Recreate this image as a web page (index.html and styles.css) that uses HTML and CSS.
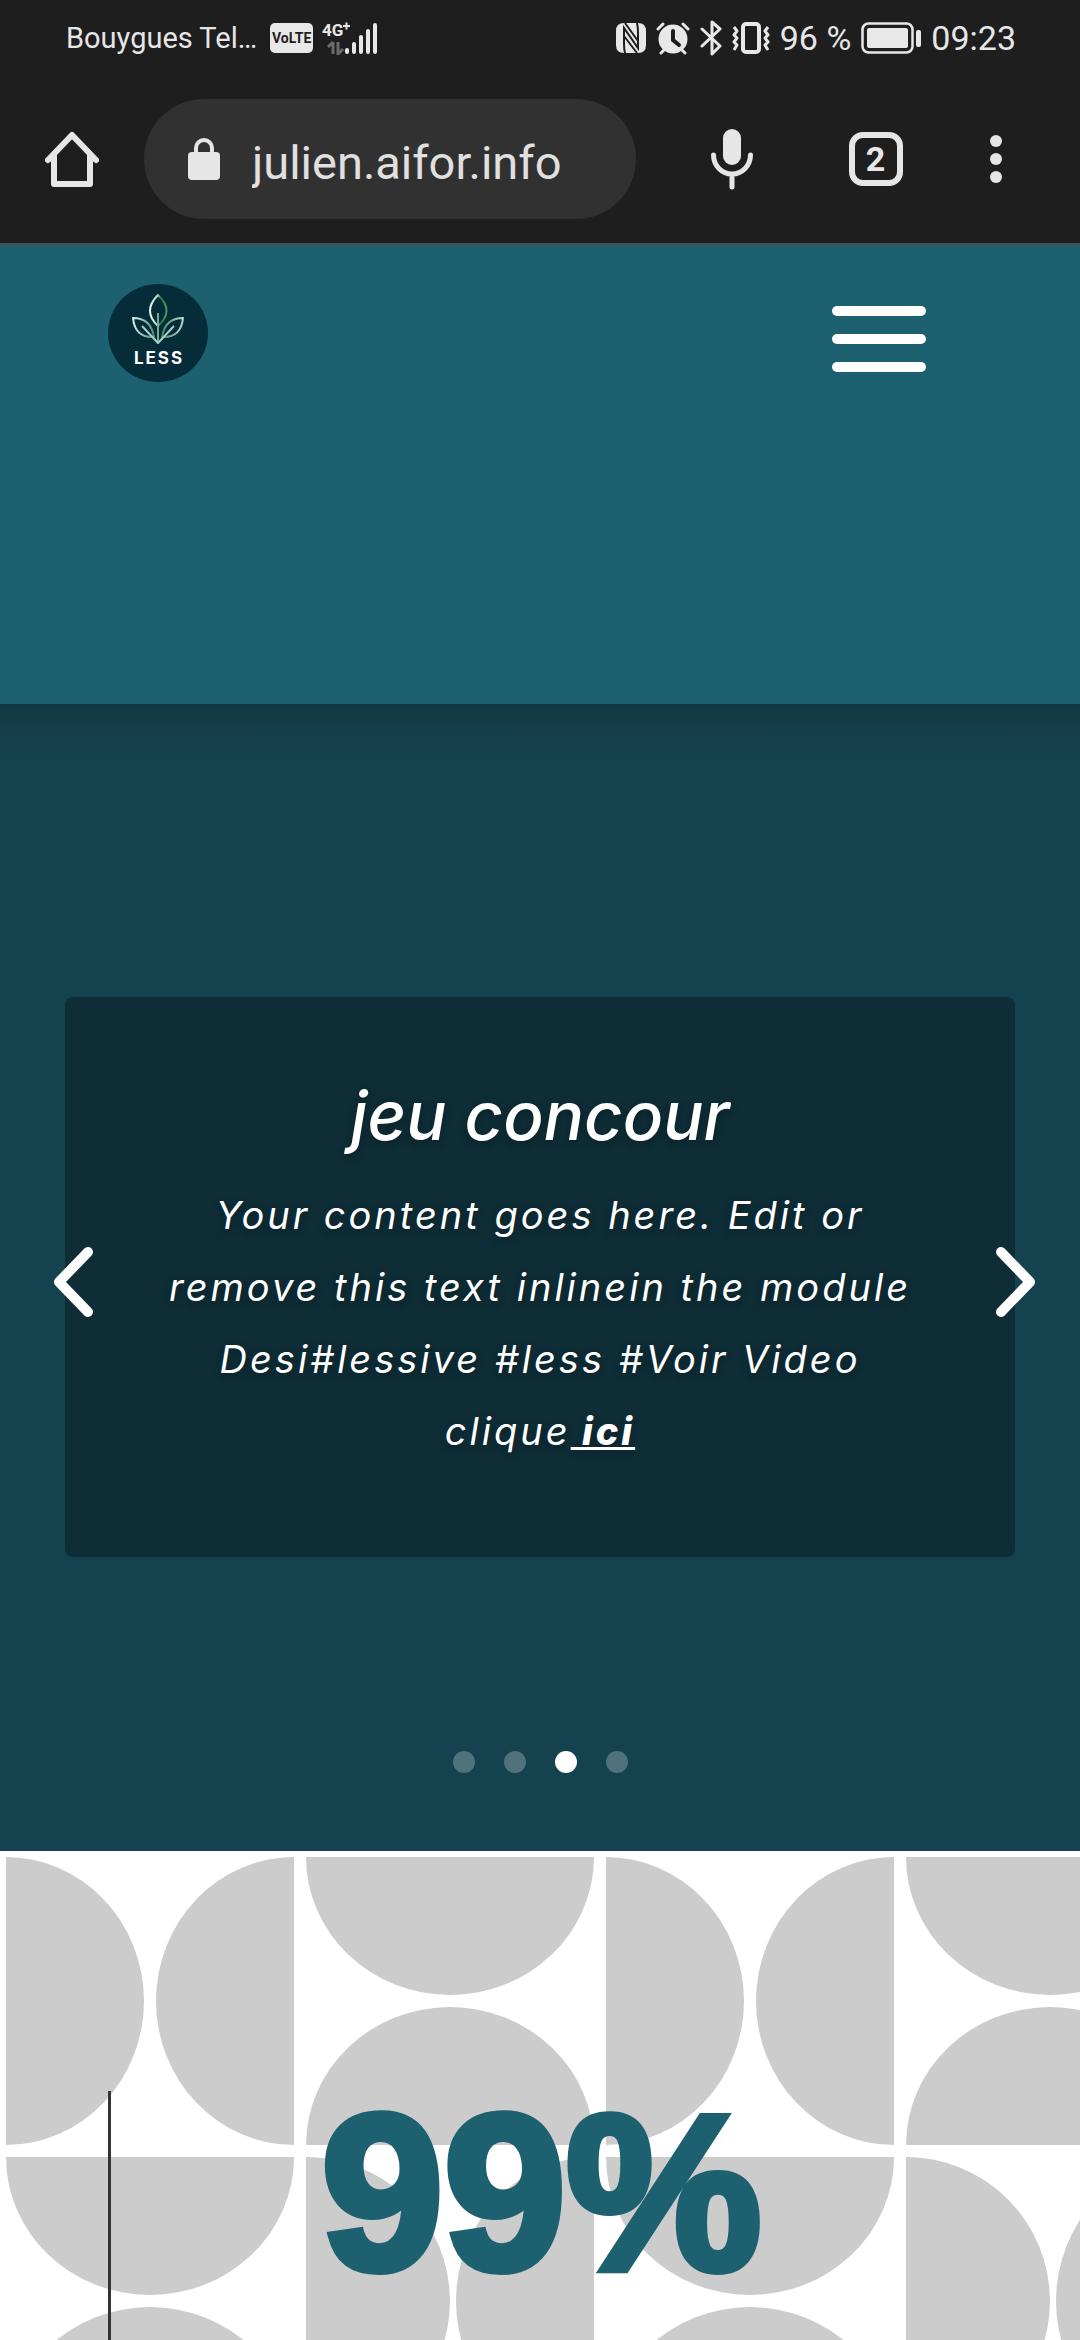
FILE: index.html
```html
<!DOCTYPE html>
<html lang="fr">
<head>
<meta charset="utf-8">
<meta name="viewport" content="width=device-width, initial-scale=1">
<title>Less</title>
<link rel="stylesheet" href="styles.css">
</head>
<body>
<div class="browser">
  <div class="status">
    <span class="carrier">Bouygues Tel…</span>
    <span class="volte">VoLTE</span>
    <svg class="signal" width="58" height="34" viewBox="0 0 58 34" fill="#e8e8e8" aria-hidden="true">
      <text class="signal-label" x="0" y="15">4G</text>
      <path d="M21 5h7M24.500 1.500v7" stroke="#e8e8e8" stroke-width="2"/>
      <path d="M11 21v12M6 26l5-5M16 21v12l5-5" fill="none" stroke="#6a6a6a" stroke-width="3"/>
      <rect x="23" y="27" width="4" height="6" rx="2"/><rect x="30" y="21" width="4" height="12" rx="2"/>
      <rect x="37" y="14" width="4" height="19" rx="2"/><rect x="44" y="8" width="4" height="25" rx="2"/>
      <rect x="51" y="2" width="4" height="31" rx="2"/>
    </svg>
    <div class="indicators">
      <svg width="30" height="34" viewBox="0 0 30 34" aria-hidden="true"><path d="M8 2H22Q30 2 30 10V24Q30 32 22 32H8Q0 32 0 24V10Q0 2 8 2Z" fill="#e8e8e8"/><path d="M9 32Q8 28 8 23V7L22 27V11Q22 6 21 2M9 2L22 20M8 15L21 32" fill="none" stroke="#1e1e1e" stroke-width="2"/></svg>
      <svg width="34" height="34" viewBox="0 0 34 34" aria-hidden="true"><circle cx="17" cy="18" r="14.500" fill="#e8e8e8"/><path d="M2 8l5-5M32 8l-5-5M5 32l4-4M29 32l-4-4" stroke="#e8e8e8" stroke-width="3" stroke-linecap="round"/><path d="M17 10v9l6 5" fill="none" stroke="#1e1e1e" stroke-width="4" stroke-linecap="round"/></svg>
      <svg width="22" height="36" viewBox="0 0 22 36" aria-hidden="true"><path d="M2 9l18 17-8 8V2l8 7L2 26" fill="none" stroke="#e8e8e8" stroke-width="3" stroke-linejoin="round" stroke-linecap="round"/></svg>
      <svg width="38" height="34" viewBox="0 0 38 34" fill="none" stroke="#e8e8e8" stroke-width="4" aria-hidden="true"><rect x="11" y="3" width="16" height="28" rx="3"/><path d="M2 6l3 4-3 4 3 3-3 4 3 3-3 5M36 6l-3 4 3 4-3 3 3 4-3 3 3 5" stroke-width="3" stroke-linejoin="round"/></svg>
      <span class="figures">96 %</span>
      <svg width="60" height="34" viewBox="0 0 60 34" aria-hidden="true"><rect x="1.500" y="2.500" width="50" height="29" rx="6" fill="none" stroke="#e8e8e8" stroke-width="2.500"/><rect x="6" y="7" width="41" height="20" rx="2" fill="#e8e8e8"/><rect x="55" y="9" width="5" height="17" rx="2" fill="#e8e8e8"/></svg>
      <span class="figures clock">09:23</span>
    </div>
  </div>
  <div class="toolbar">
    <button class="tool" aria-label="Accueil"><svg width="54" height="56" viewBox="0 0 54 56" fill="none" stroke="#e6e6e6" stroke-width="6" stroke-linecap="round" stroke-linejoin="round"><path d="M3 29L27 4l24 25M9 24v29h36V24"/></svg></button>
    <label class="address">
      <svg width="32" height="44" viewBox="0 0 32 44" aria-hidden="true"><rect y="15" width="32" height="28" rx="4" fill="#e6e6e6"/><path d="M8 17v-6a8 8 0 0 1 16 0v6" fill="none" stroke="#e6e6e6" stroke-width="4"/></svg>
      <input class="url" type="text" aria-label="Adresse" value="julien.aifor.info">
    </label>
    <div class="tools">
      <button class="tool mic" aria-label="Recherche vocale"><svg width="42" height="62" viewBox="0 0 42 62"><rect x="12" y="1" width="18" height="36" rx="9" fill="#e6e6e6"/><path d="M2.500 27a18.500 19 0 0 0 37 0M21 46v13" fill="none" stroke="#e6e6e6" stroke-width="5" stroke-linecap="round"/></svg></button>
      <button class="tool tabs" aria-label="Onglets">2</button>
      <button class="tool" aria-label="Menu"><svg width="12" height="50" viewBox="0 0 12 50" fill="#e6e6e6"><circle cx="6" cy="7" r="6"/><circle cx="6" cy="25" r="6"/><circle cx="6" cy="43" r="6"/></svg></button>
    </div>
  </div>
</div>

<header class="site-header">
  <a class="logo" href="#" aria-label="Less">
    <svg width="100" height="100" viewBox="0 0 100 100">
      <defs><linearGradient id="leaf" x1="0" x2="1"><stop offset="0" stop-color="#e4f5f3"/><stop offset=".45" stop-color="#b9d9d3"/><stop offset=".65" stop-color="#26733f"/><stop offset="1" stop-color="#4c9a63"/></linearGradient>
      <linearGradient id="side" x1="0" x2="1"><stop offset="0" stop-color="#d7efec"/><stop offset=".5" stop-color="#367b50"/><stop offset="1" stop-color="#b9d9cf"/></linearGradient></defs>
      <ellipse cx="50" cy="50" rx="50" ry="49" fill="#052c38"/>
      <g fill="none" stroke-width="2" stroke-linejoin="round">
        <path d="M50 12Q34 28 50 43Q67 28 50 12Z" stroke="url(#leaf)"/>
        <path d="M50 30V59" stroke="#75a892"/>
        <path d="M25 35Q43 35 46 54Q27 55 25 35ZM75 35Q57 35 54 54Q73 55 75 35Z" stroke="url(#side)"/>
        <path d="M34 43L50 60L66 43" stroke="#a9cfc5"/>
      </g>
      <text class="logo-name" x="51" y="81">LESS</text>
    </svg>
  </a>
  <button class="menu" aria-label="Ouvrir le menu"><span></span><span></span><span></span></button>
</header>

<main class="content">
  <section class="slider">
    <article class="slide">
      <h2>jeu concour</h2>
      <p>Your content goes here. Edit or remove this text inlinein the module Desi#lessive #less #Voir Video clique<a href="#"> ici</a></p>
    </article>
    <button class="arrow prev" aria-label="Précédent"><svg width="40" height="70" viewBox="0 0 40 70"><path d="M35 5L6 35l29 30"/></svg></button>
    <button class="arrow next" aria-label="Suivant"><svg width="40" height="70" viewBox="0 0 40 70"><path d="M5 5l29 30L5 65"/></svg></button>
    <nav class="dots" aria-label="Diapositives">
      <button aria-label="1"></button><button aria-label="2"></button><button class="active" aria-label="3"></button><button aria-label="4"></button>
    </nav>
  </section>
  <section class="stats">
    <svg class="pattern" aria-hidden="true">
      <defs><pattern id="tiles" width="600" height="600" patternUnits="userSpaceOnUse"><g fill="#ccc">
        <path d="M6 6a138 144 0 0 1 0 288zM294 6a138 144 0 0 0 0 288zM306 6a144 138 0 0 0 288 0zM306 294a144 138 0 0 1 288 0z"/>
        <path d="M6 306a144 138 0 0 0 288 0zM6 594a144 138 0 0 1 288 0zM306 306a144 144 0 0 1 0 288zM594 306a138 144 0 0 0 0 288z"/>
      </g></pattern></defs>
      <rect width="100%" height="100%" fill="url(#tiles)"/>
    </svg>
    <div class="stat"><strong>99%</strong></div>
  </section>
</main>
</body>
</html>
```

FILE: styles.css
```css
* { box-sizing: border-box; }

body {
  margin: 0;
  min-height: 100vh;
  display: flex;
  flex-direction: column;
  background: #fff;
  font-family: Inter, sans-serif;
}

button {
  padding: 0;
  border: 0;
  background: none;
  color: inherit;
  font: inherit;
}

svg { display: block; flex: none; }

/* Browser bar */
.browser {
  background: #1e1e1e;
  color: #e6e6e6;
  font-family: Roboto, sans-serif;
  border-bottom: 3px solid #3a545b;
}

.status {
  display: flex;
  align-items: center;
  height: 75px;
  padding: 0 64px 0 66px;
}

.carrier { font-size: 29px; }

.volte {
  margin: 0 9px 0 13px;
  width: 43px;
  height: 30px;
  border-radius: 5px;
  background: #e8e8e8;
  color: #1e1e1e;
  font: 700 14px/30px Roboto, sans-serif;
  text-align: center;
}

.signal-label { font: 700 17px Roboto, sans-serif; }

.indicators {
  display: flex;
  align-items: center;
  gap: 10px;
  margin-left: auto;
}

.figures { font-size: 34px; }

.toolbar {
  display: flex;
  align-items: center;
  padding: 24px 78px 24px 45px;
}

.address {
  display: flex;
  align-items: center;
  gap: 32px;
  width: 492px;
  height: 120px;
  margin-left: 45px;
  padding: 0 30px 0 44px;
  border-radius: 60px;
  background: #313131;
}

.url {
  flex: 1;
  min-width: 0;
  padding: 6px 0 0;
  border: 0;
  background: none;
  color: #e0e0e0;
  font: 47px Roboto, sans-serif;
}

.tools {
  flex: 1;
  display: flex;
  justify-content: space-between;
  align-items: center;
  margin-left: 75px;
}

.mic { width: 50px; }

.tabs {
  width: 54px;
  height: 54px;
  border: 6px solid #e6e6e6;
  border-radius: 14px;
  font-size: 34px;
  font-weight: 700;
  line-height: 42px;
}

/* Site header */
.site-header {
  display: flex;
  justify-content: space-between;
  align-items: flex-start;
  height: 458px;
  padding: 37px 154px 0 108px;
  background: #1d6170;
}

.logo-name {
  fill: #fff;
  font: 700 17px Inter, sans-serif;
  text-anchor: middle;
  letter-spacing: 2px;
}

.menu {
  display: flex;
  flex-direction: column;
  gap: 18px;
  margin-top: 23px;
}

.menu span {
  width: 94px;
  height: 10px;
  border-radius: 5px;
  background: #fff;
}

.content {
  flex: 1;
  display: flex;
  flex-direction: column;
}

/* Slider */
.slider {
  position: relative;
  padding: 293px 65px 78px;
  background: #14434f linear-gradient(rgba(14, 36, 48, .4), rgba(14, 36, 48, .12) 32px, transparent 68px);
}

.slide {
  padding: 86px 90px 90px;
  border-radius: 8px;
  background: #0e2d37;
  color: #fff;
  font-style: italic;
  text-align: center;
  text-shadow: 0 3px 9px rgba(0, 0, 0, .3);
}

.slide h2 {
  margin: 0 0 30px;
  font-size: 67px;
  font-weight: 500;
  line-height: 66px;
}

.slide p {
  margin: 0;
  font-size: 38px;
  line-height: 72px;
  letter-spacing: 3px;
}

.slide a {
  color: inherit;
  font-weight: 800;
  text-decoration-skip-ink: none;
}

.arrow {
  position: absolute;
  top: 50%;
  margin-top: 4px;
  transform: translateY(-50%);
}

.arrow path {
  fill: none;
  stroke: #fff;
  stroke-width: 10;
  stroke-linecap: round;
  stroke-linejoin: round;
}

.prev { left: 53px; }
.next { right: 44px; }

.dots {
  display: flex;
  justify-content: center;
  gap: 29px;
  margin-top: 194px;
}

.dots button {
  width: 22px;
  height: 22px;
  border-radius: 50%;
  background: #4f727c;
}

.dots .active { background: #fff; }

/* Key figure */
.stats {
  position: relative;
  flex: 1;
  display: flex;
  padding: 240px 108px 0;
}

.pattern {
  position: absolute;
  inset: 0;
  width: 100%;
  height: 100%;
}

.stat {
  position: relative;
  flex: 1;
  border-left: 3px solid #333;
  color: #1d6170;
  text-align: center;
}

.stat strong {
  display: block;
  font: 700 220px/204px "Liberation Sans", sans-serif;
  -webkit-text-stroke: 8px #1d6170;
}
```
